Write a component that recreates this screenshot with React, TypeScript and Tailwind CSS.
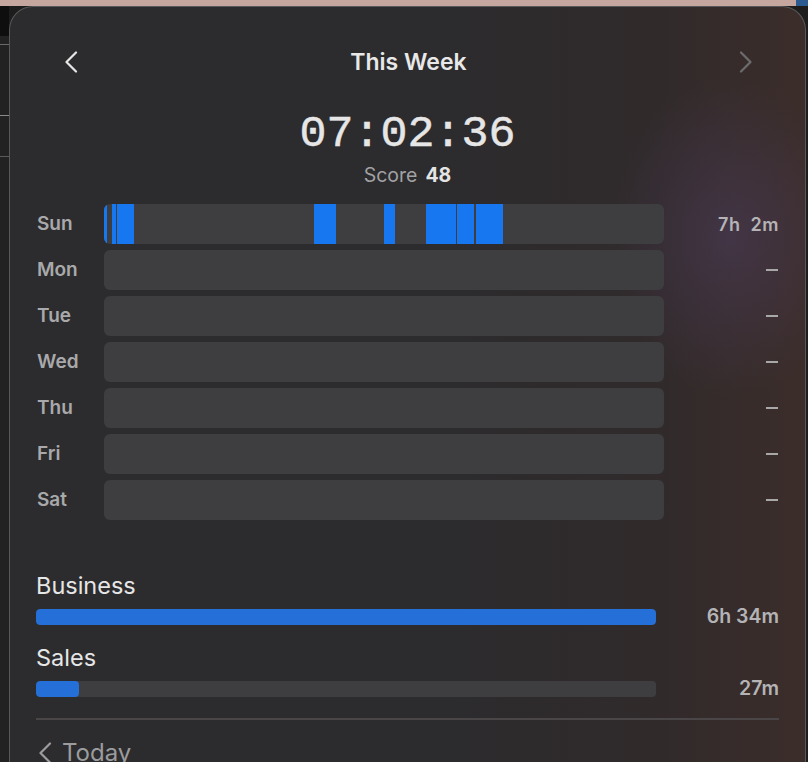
import React from 'react';

type Segment = { start: number; end: number };

const DAY_BAR_WIDTH = 560;

// pixel ranges inside the Sunday bar
const sunday: Segment[] = [
  { start: 0, end: 3 },
  { start: 8, end: 12 },
  { start: 13, end: 30 },
  { start: 210, end: 232 },
  { start: 280, end: 291 },
  { start: 322, end: 352 },
  { start: 353, end: 370 },
  { start: 372, end: 399 },
];

const days = [
  { label: 'Sun', total: '7h  2m', segments: sunday },
  { label: 'Mon', total: '', segments: [] },
  { label: 'Tue', total: '', segments: [] },
  { label: 'Wed', total: '', segments: [] },
  { label: 'Thu', total: '', segments: [] },
  { label: 'Fri', total: '', segments: [] },
  { label: 'Sat', total: '', segments: [] },
];

const categories = [
  { name: 'Business', total: '6h 34m', ratio: 1 },
  { name: 'Sales', total: '27m', ratio: 43 / 620 },
];

const Chevron = ({ dir, className }: { dir: 'left' | 'right'; className?: string }) => (
  <svg width="14" height="22" viewBox="0 0 14 22" fill="none" className={className}>
    <path
      d={dir === 'left' ? 'M12 1.5 L2.5 11 L12 20.5' : 'M2 1.5 L11.5 11 L2 20.5'}
      stroke="currentColor"
      strokeWidth="2.2"
      strokeLinecap="round"
      strokeLinejoin="round"
    />
  </svg>
);

const DayRow = ({ label, total, segments }: { label: string; total: string; segments: Segment[] }) => (
  <div className="flex items-center h-[40px]">
    <div className="w-[68px] pl-[1px] pt-[1px] text-[19px] font-semibold text-[#a9a9ab]">{label}</div>
    <div className="relative w-[560px] h-[40px] rounded-[6px] bg-[#3e3e40] overflow-hidden">
      {segments.map((s, i) => (
        <div
          key={i}
          className="absolute top-0 bottom-0 bg-[#1677f0]"
          style={{
            left: `${(s.start / DAY_BAR_WIDTH) * 100}%`,
            width: `${((s.end - s.start) / DAY_BAR_WIDTH) * 100}%`,
          }}
        />
      ))}
    </div>
    <div className="flex-1 flex justify-end text-[18px] font-semibold text-[#b4b4b6] tracking-[0.5px] whitespace-pre">
      {total ? total : <div className="w-[12px] h-[2px] bg-[#a8a8a8] mr-[1px]" />}
    </div>
  </div>
);

export default function App() {
  return (
    <div
      className="w-[808px] h-[762px] overflow-hidden flex flex-col bg-[#1d1d1d]"
      style={{ fontFamily: 'Inter, "Noto Sans", sans-serif' }}
    >
      {/* desktop strip above the window */}
      <div className="h-[6px] flex bg-[#c6a79f]">
        <div className="flex-1" />
        <div className="w-[12px] bg-[#2a5c92]" />
      </div>

      <div className="flex-1 flex min-h-0">
        {/* window behind, on the left */}
        <div className="w-[9px] bg-[#222222] flex flex-col">
          <div className="h-[30px] bg-[#0e0e0e]" />
          <div className="h-[1px] mt-[8px] bg-[#6a6a6a]" />
          <div className="h-[70px]" />
          <div className="h-[1px] bg-[#8a8a8a]" />
          <div className="h-[40px]" />
          <div className="h-[1px] bg-[#5a5a5a]" />
        </div>

        {/* popover */}
        <div className="relative flex-1 rounded-t-[24px] border-t border-l border-r border-[#58585a] bg-[linear-gradient(90deg,#2c2c2e_0%,#2c2b2d_55%,#302a2b_80%,#3b2d2a_100%)] overflow-hidden">
          <div className="pointer-events-none absolute inset-0 bg-[radial-gradient(ellipse_120px_160px_at_720px_230px,rgba(90,70,120,0.35),transparent)]" />

          <div className="relative flex flex-col pl-[26px] pr-[26px]">
            {/* header */}
            <div className="mt-[35px] h-[40px] flex items-center justify-between">
              <div className="pl-[28px] text-[#e6e6e6]">
                <Chevron dir="left" />
              </div>
              <div className="text-[23px] font-semibold text-[#e8e8e8]">This Week</div>
              <div className="pr-[26px] text-[#6c6c6e]">
                <Chevron dir="right" />
              </div>
            </div>

            {/* total time */}
            <div
              className="mt-[27px] h-[52px] flex items-center justify-center text-[45px] leading-[52px] text-[#e6e6e6] [-webkit-text-stroke:0.5px_#e6e6e6]"
              style={{ fontFamily: '"Liberation Mono", "DejaVu Sans Mono", monospace' }}
            >
              07:02:36
            </div>
            <div className="mt-[3px] h-[24px] flex items-center justify-center gap-[8px] text-[19.5px]">
              <span className="text-[#a2a2a4]">Score</span>
              <span className="font-bold text-[#e4e4e4]">48</span>
            </div>

            {/* week */}
            <div className="mt-[16px] flex flex-col gap-[6px]">
              {days.map((d) => (
                <DayRow key={d.label} {...d} />
              ))}
            </div>

            {/* categories */}
            <div className="mt-[52px] flex flex-col">
              {categories.map((c, i) => (
                <div key={c.name} className={i > 0 ? 'mt-[19px]' : ''}>
                  <div className="h-[28px] flex items-center text-[23.5px] text-[#e6e6e6]">{c.name}</div>
                  <div className="mt-[9px] flex items-center h-[16px]">
                    <div className="w-[620px] h-[16px] rounded-[4px] bg-[#3e3e40] overflow-hidden">
                      <div className="h-full bg-[#2470d8] rounded-[4px]" style={{ width: `${c.ratio * 100}%` }} />
                    </div>
                    <div className="flex-1 text-right text-[19.5px] font-semibold text-[#b4b4b6]">{c.total}</div>
                  </div>
                </div>
              ))}
            </div>

            <div className="mt-[21px] h-[2px] bg-[#4a4647]" />

            {/* footer */}
            <div className="mt-[18px] h-[30px] flex items-center gap-[10px] text-[#9c9c9e]">
              <Chevron dir="left" className="ml-[2px]" />
              <span className="text-[24px]">Today</span>
            </div>
          </div>
        </div>

        <div className="w-[2px] bg-[#1d1d1d]" />
      </div>
    </div>
  );
}
